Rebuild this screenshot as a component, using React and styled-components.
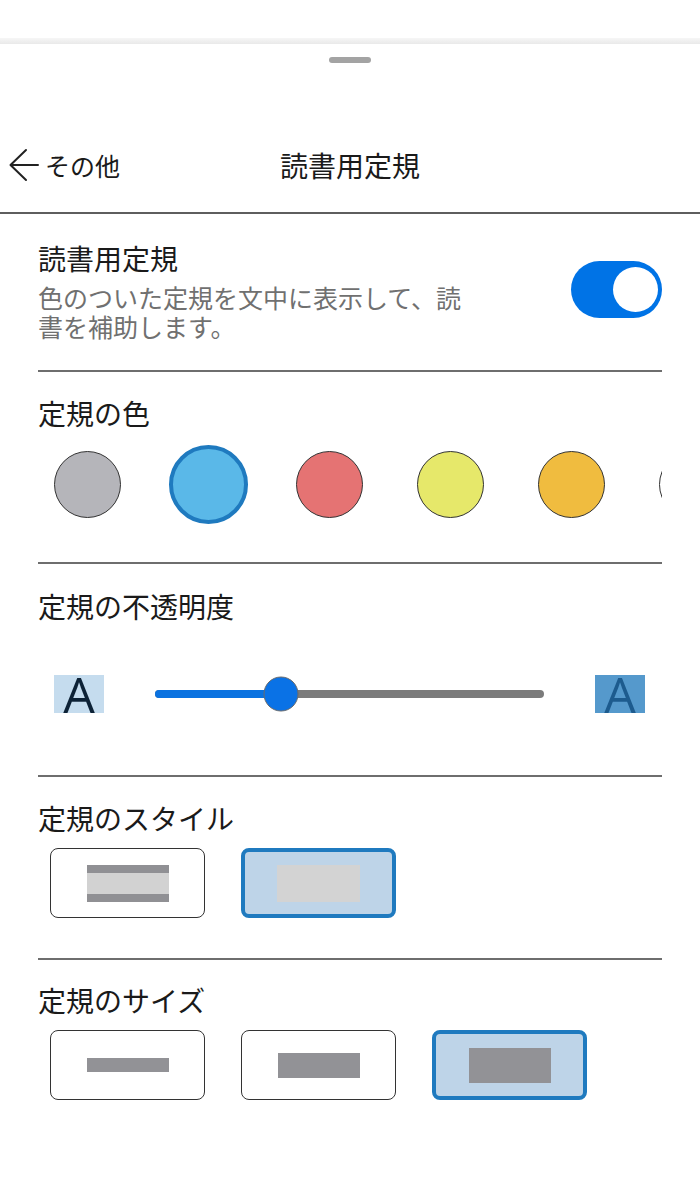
import styled, { createGlobalStyle } from 'styled-components';

const GlobalStyle = createGlobalStyle`
  html, body {
    margin: 0;
    padding: 0;
    background: #ffffff;
  }
  body {
    font-family: "Noto Sans CJK JP", "Noto Sans", sans-serif;
    color: #1a1a1a;
  }
`;

const colors = [
  { id: 'gray', fill: '#b5b5ba' },
  { id: 'blue', fill: '#5ab8e8', selected: true },
  { id: 'red', fill: '#e57373' },
  { id: 'yellow', fill: '#e6e86a' },
  { id: 'orange', fill: '#f0bc3f' },
  { id: 'white', fill: '#ffffff' },
];

const sizes = [14, 25, 35];

const App = () => {
  return (
    <Page>
      <GlobalStyle />
      <StatusSpace />
      <SheetShadow />
      <Sheet>
        <Handle />
        <Header>
          <BackButton>
            <svg width="30" height="34" viewBox="0 0 30 34" fill="none">
              <path d="M1.5 17 H29 M17 2 L1.5 17 L17 32" stroke="#222" strokeWidth="2" strokeLinecap="round" strokeLinejoin="round" />
            </svg>
            <BackLabel>その他</BackLabel>
          </BackButton>
          <HeaderTitle>読書用定規</HeaderTitle>
          <span />
        </Header>

        <Section pt={24} pb={29}>
          <ToggleRow>
            <div>
              <SectionTitle>読書用定規</SectionTitle>
              <Description>色のついた定規を文中に表示して、読書を補助します。</Description>
            </div>
            <Toggle>
              <Knob />
            </Toggle>
          </ToggleRow>
        </Section>

        <Section pt={21} pb={38}>
          <SectionTitle>定規の色</SectionTitle>
          <SwatchRow>
            {colors.map((c) => (
              <SwatchCell key={c.id}>
                <Swatch fill={c.fill} selected={c.selected} />
              </SwatchCell>
            ))}
          </SwatchRow>
        </Section>

        <Section pt={22} pb={62}>
          <SectionTitle>定規の不透明度</SectionTitle>
          <SliderRow>
            <LetterBox bg="#c5dcee" fg="#0d2236">A</LetterBox>
            <Track>
              <TrackFill style={{ width: '32.4%' }} />
              <Thumb style={{ left: '32.4%' }} />
            </Track>
            <LetterBox bg="#5599cc" fg="#1d5b8e">A</LetterBox>
          </SliderRow>
        </Section>

        <Section pt={21} pb={40}>
          <SectionTitle>定規のスタイル</SectionTitle>
          <OptionRow>
            <OptionButton>
              <StripedBar>
                <BarEdge />
                <BarMiddle />
                <BarEdge />
              </StripedBar>
            </OptionButton>
            <OptionButton selected>
              <SolidBar />
            </OptionButton>
          </OptionRow>
        </Section>

        <Section pt={20} last>
          <SectionTitle>定規のサイズ</SectionTitle>
          <OptionRow>
            {sizes.map((h, i) => (
              <OptionButton key={h} selected={i === 2}>
                <SizeBar h={h} />
              </OptionButton>
            ))}
          </OptionRow>
        </Section>
      </Sheet>
    </Page>
  );
};

const Page = styled.div`
  width: 700px;
  min-height: 1191px;
  background: #ffffff;
  overflow: hidden;
`;

const StatusSpace = styled.div`
  height: 38px;
  background: #ffffff;
`;

const SheetShadow = styled.div`
  height: 6px;
  background: linear-gradient(#f6f6f6, #e9e9e9);
`;

const Sheet = styled.div`
  display: flex;
  flex-direction: column;
  background: #ffffff;
`;

const Handle = styled.div`
  align-self: center;
  width: 42px;
  height: 6px;
  margin-top: 13px;
  border-radius: 3px;
  background: #a3a3a3;
`;

const Header = styled.div`
  display: grid;
  grid-template-columns: 1fr auto 1fr;
  align-items: center;
  height: 94px;
  margin-top: 55px;
  border-bottom: 2px solid #5e5e5e;
`;

const BackButton = styled.div`
  display: flex;
  align-items: center;
  gap: 6px;
  padding-left: 9px;
`;

const BackLabel = styled.span`
  font-size: 25px;
  line-height: 34px;
  color: #1a1a1a;
`;

const HeaderTitle = styled.div`
  font-size: 28px;
  line-height: 40px;
  color: #1a1a1a;
`;

const Section = styled.div`
  margin: 0 38px;
  padding-top: ${({ pt }) => pt}px;
  padding-bottom: ${({ pb }) => pb || 0}px;
  border-bottom: ${({ last }) => (last ? 'none' : '2px solid #6e6e6e')};
`;

const ToggleRow = styled.div`
  display: flex;
  align-items: center;
  justify-content: space-between;
`;

const SectionTitle = styled.div`
  font-size: 28px;
  line-height: 40px;
  color: #1a1a1a;
`;

const Description = styled.div`
  width: 432px;
  margin-top: 5px;
  font-size: 25px;
  line-height: 29px;
  color: #707070;
`;

const Toggle = styled.div`
  display: flex;
  align-items: center;
  justify-content: flex-end;
  box-sizing: border-box;
  width: 91px;
  height: 57px;
  padding-right: 4px;
  border-radius: 29px;
  background: #0073e6;
`;

const Knob = styled.div`
  width: 45px;
  height: 45px;
  border-radius: 50%;
  background: #ffffff;
`;

const SwatchRow = styled.div`
  display: flex;
  gap: 42px;
  margin-top: 11px;
  padding-left: 10px;
  overflow: hidden;
`;

const SwatchCell = styled.div`
  flex: 0 0 79px;
  height: 80px;
  display: flex;
  align-items: center;
  justify-content: center;
`;

const Swatch = styled.div`
  box-sizing: border-box;
  width: ${({ selected }) => (selected ? 79 : 67)}px;
  height: ${({ selected }) => (selected ? 79 : 67)}px;
  border-radius: 50%;
  background: ${({ fill }) => fill};
  border: ${({ selected }) => (selected ? '4px solid #1f7abf' : '1.5px solid #333')};
`;

const SliderRow = styled.div`
  display: flex;
  align-items: center;
  gap: 51px;
  margin-top: 49px;
  padding: 0 17px 0 16px;
`;

const LetterBox = styled.div`
  flex: 0 0 50px;
  height: 38px;
  text-align: center;
  font-family: "Open Sans", "Noto Sans", sans-serif;
  font-weight: 400;
  font-size: 50px;
  line-height: 38px;
  background: ${({ bg }) => bg};
  color: ${({ fg }) => fg};
`;

const Track = styled.div`
  position: relative;
  flex: 1;
  height: 8px;
  border-radius: 4px;
  background: #7b7b7b;
`;

const TrackFill = styled.div`
  height: 100%;
  border-radius: 4px;
  background: #0a72e0;
`;

const Thumb = styled.div`
  position: absolute;
  top: 50%;
  box-sizing: border-box;
  width: 35px;
  height: 35px;
  border-radius: 50%;
  background: #0a72e6;
  border: 1.5px solid #6b6b6b;
  transform: translate(-50%, -50%);
`;

const OptionRow = styled.div`
  display: flex;
  gap: 36px;
  margin-top: 10px;
  padding-left: 12px;
`;

const OptionButton = styled.div`
  box-sizing: border-box;
  width: 155px;
  height: 70px;
  display: flex;
  align-items: center;
  justify-content: center;
  border-radius: 8px;
  background: ${({ selected }) => (selected ? '#bed4e8' : '#ffffff')};
  border: ${({ selected }) => (selected ? '4px solid #1f7abf' : '1.5px solid #333')};
`;

const StripedBar = styled.div`
  display: flex;
  flex-direction: column;
  width: 82px;
`;

const BarEdge = styled.div`
  height: 8px;
  background: #909094;
`;

const BarMiddle = styled.div`
  height: 21px;
  background: #d2d2d2;
`;

const SolidBar = styled.div`
  width: 83px;
  height: 37px;
  background: #d3d3d3;
`;

const SizeBar = styled.div`
  width: 82px;
  height: ${({ h }) => h}px;
  background: #929296;
`;

export default App;
